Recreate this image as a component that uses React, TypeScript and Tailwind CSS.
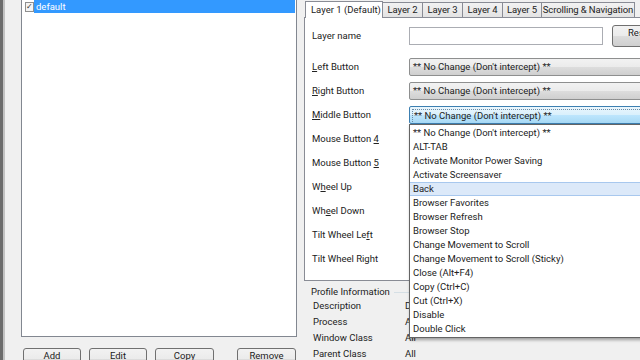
import React from 'react';

const tabs = [
  { label: 'Layer 2', w: 'w-[40px]' },
  { label: 'Layer 3', w: 'w-[40px]' },
  { label: 'Layer 4', w: 'w-[40px]' },
  { label: 'Layer 5', w: 'w-[39px]' },
  { label: 'Scrolling & Navigation', w: 'w-[93px]' },
];

const options = [
  "** No Change (Don't intercept) **",
  'ALT-TAB',
  'Activate Monitor Power Saving',
  'Activate Screensaver',
  'Back',
  'Browser Favorites',
  'Browser Refresh',
  'Browser Stop',
  'Change Movement to Scroll',
  'Change Movement to Scroll (Sticky)',
  'Close (Alt+F4)',
  'Copy (Ctrl+C)',
  'Cut (Ctrl+X)',
  'Disable',
  'Double Click',
];

// label parts: [before, mnemonic, after]
const buttonRows: [string, string, string][] = [
  ['', 'L', 'eft Button'],
  ['', 'R', 'ight Button'],
  ['', 'M', 'iddle Button'],
  ['Mouse Button ', '4', ''],
  ['Mouse Button ', '5', ''],
  ['W', 'h', 'eel Up'],
  ['Wh', 'e', 'el Down'],
  ['Tilt Wheel Le', 'f', 't'],
  ['Tilt Wheel Right', '', ''],
];

const profileRows = [
  ['Description', 'D'],
  ['Process', 'A'],
  ['Window Class', 'All'],
  ['Parent Class', 'All'],
];

const btn =
  'h-[22px] rounded-[3px] border border-[#707070] bg-[linear-gradient(#f2f2f2_0%,#ebebeb_50%,#dddddd_50%,#cfcfcf_100%)] flex items-start justify-center pt-[1px] text-[#1b1b1b] shrink-0';

const Combo: React.FC<{ focused?: boolean }> = ({ focused }) => (
  <div
    className={`h-[18px] w-[260px] shrink-0 rounded-[2px] border flex items-center pl-[2px] ${
      focused
        ? 'border-[#3c7fb1] bg-[linear-gradient(#eaf6fd_0%,#d9f0fc_50%,#bee6fd_50%,#a7d9f5_100%)]'
        : 'border-[#8e8f8f] bg-[linear-gradient(#f2f2f2_0%,#ebebeb_50%,#dddddd_50%,#cfcfcf_100%)]'
    }`}
  >
    <span
      className={`whitespace-nowrap pl-[1px] ${
        focused ? 'border-t border-l border-dotted border-[#6a8aa4] w-full leading-[12px]' : ''
      }`}
    >
      ** No Change (Don't intercept) **
    </span>
  </div>
);

export default function App() {
  return (
    <div className="relative w-[640px] h-[360px] overflow-hidden bg-[#f0f0f0] flex text-[9.5px] leading-[12px] text-[#222] font-['Roboto',sans-serif]">
      {/* window frame edge */}
      <div className="w-[3px] shrink-0 bg-[#6c6c6c]" />
      <div className="w-[2px] shrink-0 bg-[#c2c2c2]" />

      {/* profiles list */}
      <div className="ml-[16px] w-[276px] shrink-0 flex flex-col">
        <div className="h-[337px] shrink-0 bg-white border-x border-b border-[#828790] pl-[3px] pr-[1px]">
          <div className="flex items-center h-[13px]">
            <div className="w-[9px] h-[10px] border border-[#8f8f8f] bg-[#f4f4f4] flex items-center justify-center text-[8px] leading-[8px] text-[#333]">
              ✓
            </div>
            <div className="flex-1 h-[13px] bg-[#3399ff] text-white pl-[2px] flex items-center">default</div>
          </div>
        </div>
        <div className="flex shrink-0 mt-[11px] ml-[2px]">
          <div className={`${btn} w-[58px]`}>Add</div>
          <div className={`${btn} w-[58px] ml-[8px]`}>Edit</div>
          <div className={`${btn} w-[59px] ml-[8px]`}>Copy</div>
          <div className={`${btn} w-[59px] ml-[23px]`}>Remove</div>
        </div>
      </div>

      {/* layer settings */}
      <div className="ml-[7px] w-[400px] shrink-0 flex flex-col">
        <div className="flex shrink-0 items-end h-[17px] pl-[1px]">
          <div className="relative z-10 w-[78px] h-[17px] mb-[-1px] bg-white border-x border-t border-[#898c95] pl-[5px] pt-[2px] whitespace-nowrap">
            Layer 1 (Default)
          </div>
          {tabs.map((t) => (
            <div
              key={t.label}
              className={`${t.w} h-[15px] border-t border-r border-[#898c95] bg-[linear-gradient(#f2f2f2,#e3e3e3)] text-center pt-[1px] whitespace-nowrap tracking-[-0.1px]`}
            >
              {t.label}
            </div>
          ))}
        </div>
        <div className="h-[264px] shrink-0 bg-white border border-[#898c95] pl-[7px] pt-[9px]">
          <div className="flex items-center h-[18px]">
            <div className="w-[97px] shrink-0">Layer name</div>
            <div className="w-[194px] h-[18px] shrink-0 border border-[#abadb3] bg-white" />
            <div className={`${btn} w-[56px] ml-[9px] h-[19px] items-center pt-0`}>Reset</div>
          </div>
          <div className="mt-[10px] flex flex-col">
            {buttonRows.map(([a, m, b], i) => (
              <div key={i} className="flex items-center h-[24px]">
                <div className="w-[97px] shrink-0 whitespace-nowrap">
                  {a}
                  {m && <u className="underline-offset-1">{m}</u>}
                  {b}
                </div>
                {i < 3 && <Combo focused={i === 2} />}
              </div>
            ))}
          </div>
        </div>

        {/* profile information */}
        <div className="flex shrink-0 items-center mt-[5px] pl-[7px] h-[12px]">
          <span>Profile Information</span>
          <div className="ml-[4px] flex-1 h-px bg-[#d5dfe5]" />
        </div>
        <div className="flex flex-col pl-[9px]">
          {profileRows.map(([k, v]) => (
            <div key={k} className="flex shrink-0 items-center h-[16px]">
              <div className="w-[92px] shrink-0">{k}</div>
              <div>{v}</div>
            </div>
          ))}
        </div>
      </div>

      {/* open dropdown list */}
      <div className="absolute left-[409px] top-[124px] w-[240px] h-[214px] bg-white border border-[#646464] shadow-[1px_2px_3px_rgba(0,0,0,0.35)] pt-[1px]">
        {options.map((o) => (
          <div
            key={o}
            className={`h-[14px] flex items-center pl-[3px] whitespace-nowrap ${
              o === 'Back' ? 'bg-[#dce9f9] border-y border-[#a8c8ee]' : ''
            }`}
          >
            {o}
          </div>
        ))}
      </div>
    </div>
  );
}
